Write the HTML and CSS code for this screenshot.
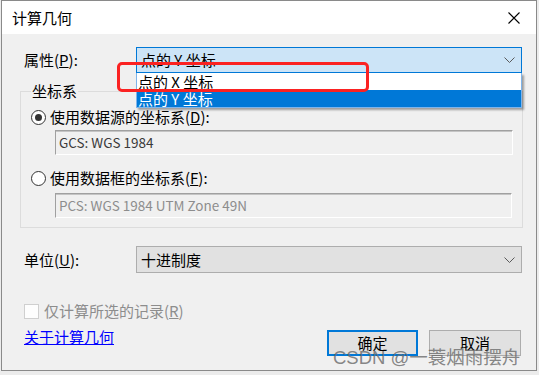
FILE: index.html
```html
<!DOCTYPE html>
<html lang="zh-CN">
<head>
	<meta charset="UTF-8">
	<title>计算几何</title>
	<link rel="stylesheet" href="styles.css">
</head>
<body>
	<div id="dialog">
		<div class="titlebar">
			<span class="title">计算几何</span>
			<svg class="close" width="12" height="12" viewBox="0 0 12 12"><path d="M0.5 0.5 L11.5 11.5 M11.5 0.5 L0.5 11.5" stroke="#000" stroke-width="1.1" fill="none"/></svg>
		</div>
		<div class="content">
			<div class="row row-prop">
				<span class="lbl">属性(<u>P</u>):</span>
				<div class="combo combo-open">
					<span>点的 Y 坐标</span>
					<svg class="chev" width="11" height="6" viewBox="0 0 11 6"><path d="M0.5 0.5 L5.5 5.5 L10.5 0.5" stroke="#5a5a5a" fill="none"/></svg>
					<ul class="droplist">
						<li>点的 X 坐标</li>
						<li class="sel">点的 Y 坐标</li>
					</ul>
				</div>
			</div>

			<fieldset class="coords">
				<legend>坐标系</legend>
				<div class="radio-row">
					<span class="radio checked"></span>使用数据源的坐标系(<u>D</u>):
				</div>
				<div class="textbox">GCS: WGS 1984</div>
				<div class="radio-row second">
					<span class="radio"></span>使用数据框的坐标系(<u>F</u>):
				</div>
				<div class="textbox off">PCS: WGS 1984 UTM Zone 49N</div>
			</fieldset>

			<div class="row row-unit">
				<span class="lbl">单位(<u>U</u>):</span>
				<div class="combo">
					<span>十进制度</span>
					<svg class="chev" width="11" height="6" viewBox="0 0 11 6"><path d="M0.5 0.5 L5.5 5.5 L10.5 0.5" stroke="#5a5a5a" fill="none"/></svg>
				</div>
			</div>

			<div class="footer">
				<div class="footer-l">
					<div class="check-row"><span class="checkbox"></span>仅计算所选的记录(<u>R</u>)</div>
					<a class="about" href="#">关于计算几何</a>
				</div>
				<div class="buttons">
					<button class="btn btn-default">确定</button>
					<button class="btn">取消</button>
				</div>
			</div>
		</div>

		<!-- 截图上的红框标注 -->
		<div class="mark"></div>
		<div class="watermark">CSDN @一蓑烟雨摆舟</div>
	</div>
</body>
</html>
```

FILE: styles.css
```css
*{
	margin: 0;
	padding: 0;
	box-sizing: border-box;
}
body{
	background: #ececec;
	font-family: "Noto Sans CJK SC", "Liberation Sans", sans-serif;
	font-size: 15px;
	line-height: 20px;
	color: #000;
}
#dialog{
	position: relative;
	width: 536px;
	margin-left: 1px;
	border: 1px solid #8a8a8a;
	background: #f0f0f0;
}
/*标题栏*/
.titlebar{
	height: 33px;
	background: #fff;
	display: flex;
	align-items: center;
	justify-content: space-between;
	padding: 0 16px 0 10px;
}
.close{
	display: block;
}
/*内容部分*/
.content{
	padding: 13px 13px 14px 18px;
}
.row{
	display: flex;
	align-items: center;
}
.lbl{
	width: 116px;
	padding-left: 4px;
}
.combo{
	position: relative;
	flex: 1;
	height: 26px;
	margin-right: 1px;
	display: flex;
	align-items: center;
	justify-content: space-between;
	padding: 0 6px 0 4px;
	background: #e1e1e1;
	border: 1px solid #adadad;
}
.combo-open{
	background: #cce4f7;
	border-color: #0078d7;
}
.chev{
	display: block;
}
/*下拉列表*/
.droplist{
	position: absolute;
	top: calc(100% + 1px);
	left: -1px;
	width: calc(100% + 2px);
	list-style: none;
	background: #fff;
	border: 1px solid #7eb4ea;
	border-top: 0;
	box-shadow: 2px 2px 2px rgba(0,0,0,0.35);
	z-index: 2;
}
.droplist li{
	height: 17px;
	line-height: 17px;
	padding-left: 1px;
}
.droplist li.sel{
	background: #0078d7;
	color: #fff;
}
/*坐标系分组*/
.coords{
	margin-top: 8px;
	border: 1px solid #dcdcdc;
	padding: 0 9px 9px 10px;
	min-width: 0;
}
.coords legend{
	padding: 0 1px;
	line-height: 20px;
}
.radio-row{
	display: flex;
	align-items: center;
	height: 20px;
	margin-top: 6px;
}
.radio-row.second{
	margin-top: 13px;
}
.radio{
	width: 15px;
	height: 15px;
	border: 1px solid #333;
	border-radius: 50%;
	margin-right: 4px;
	background: #fff;
	display: flex;
	align-items: center;
	justify-content: center;
}
.radio.checked::after{
	content: "";
	width: 7px;
	height: 7px;
	border-radius: 50%;
	background: #333;
}
.textbox{
	height: 25px;
	margin: 3px 0 0 24px;
	padding-left: 3px;
	border: 1px solid;
	border-color: #a0a0a0 #fff #fff #a0a0a0;
	box-shadow: inset 0 1px 0 #c4c4c4;
	font-size: 13.5px;
	line-height: 23px;
	color: #3a3a3a;
}
.textbox.off{
	margin-top: 5px;
	margin-right: 1px;
	color: #8d8d8d;
}
.row-unit{
	margin-top: 18px;
}
.row-unit .combo{
	height: 27px;
}
/*底部*/
.footer{
	display: flex;
	justify-content: space-between;
	align-items: flex-start;
	margin-top: 28px;
}
.check-row{
	display: flex;
	align-items: center;
	height: 20px;
	padding-left: 4px;
	color: #8d8d8d;
}
.checkbox{
	width: 15px;
	height: 15px;
	border: 1px solid #cfcfcf;
	background: #fdfdfd;
	margin-right: 5px;
}
.about{
	display: block;
	margin: 6px 0 0 4px;
	color: #0000ff;
	text-decoration: underline;
	width: max-content;
}
.buttons{
	display: flex;
	gap: 11px;
	margin: 29px 2px 0 0;
}
.btn{
	width: 92px;
	height: 26px;
	background: #e1e1e1;
	border: 1px solid #adadad;
	font: inherit;
	line-height: 20px;
	color: #000;
}
.btn-default{
	width: 91px;
	border: 2px solid #0078d7;
}
/*标注与水印*/
.mark{
	position: absolute;
	left: 115px;
	top: 61px;
	width: 252px;
	height: 30px;
	border: 3px solid #fb2222;
	border-radius: 5px;
	z-index: 3;
}
.watermark{
	position: absolute;
	left: 331px;
	top: 346px;
	font-family: "Liberation Sans", "Noto Sans CJK SC", sans-serif;
	font-size: 18.5px;
	line-height: 22px;
	color: rgba(105,105,105,0.8);
	z-index: 3;
}
```
